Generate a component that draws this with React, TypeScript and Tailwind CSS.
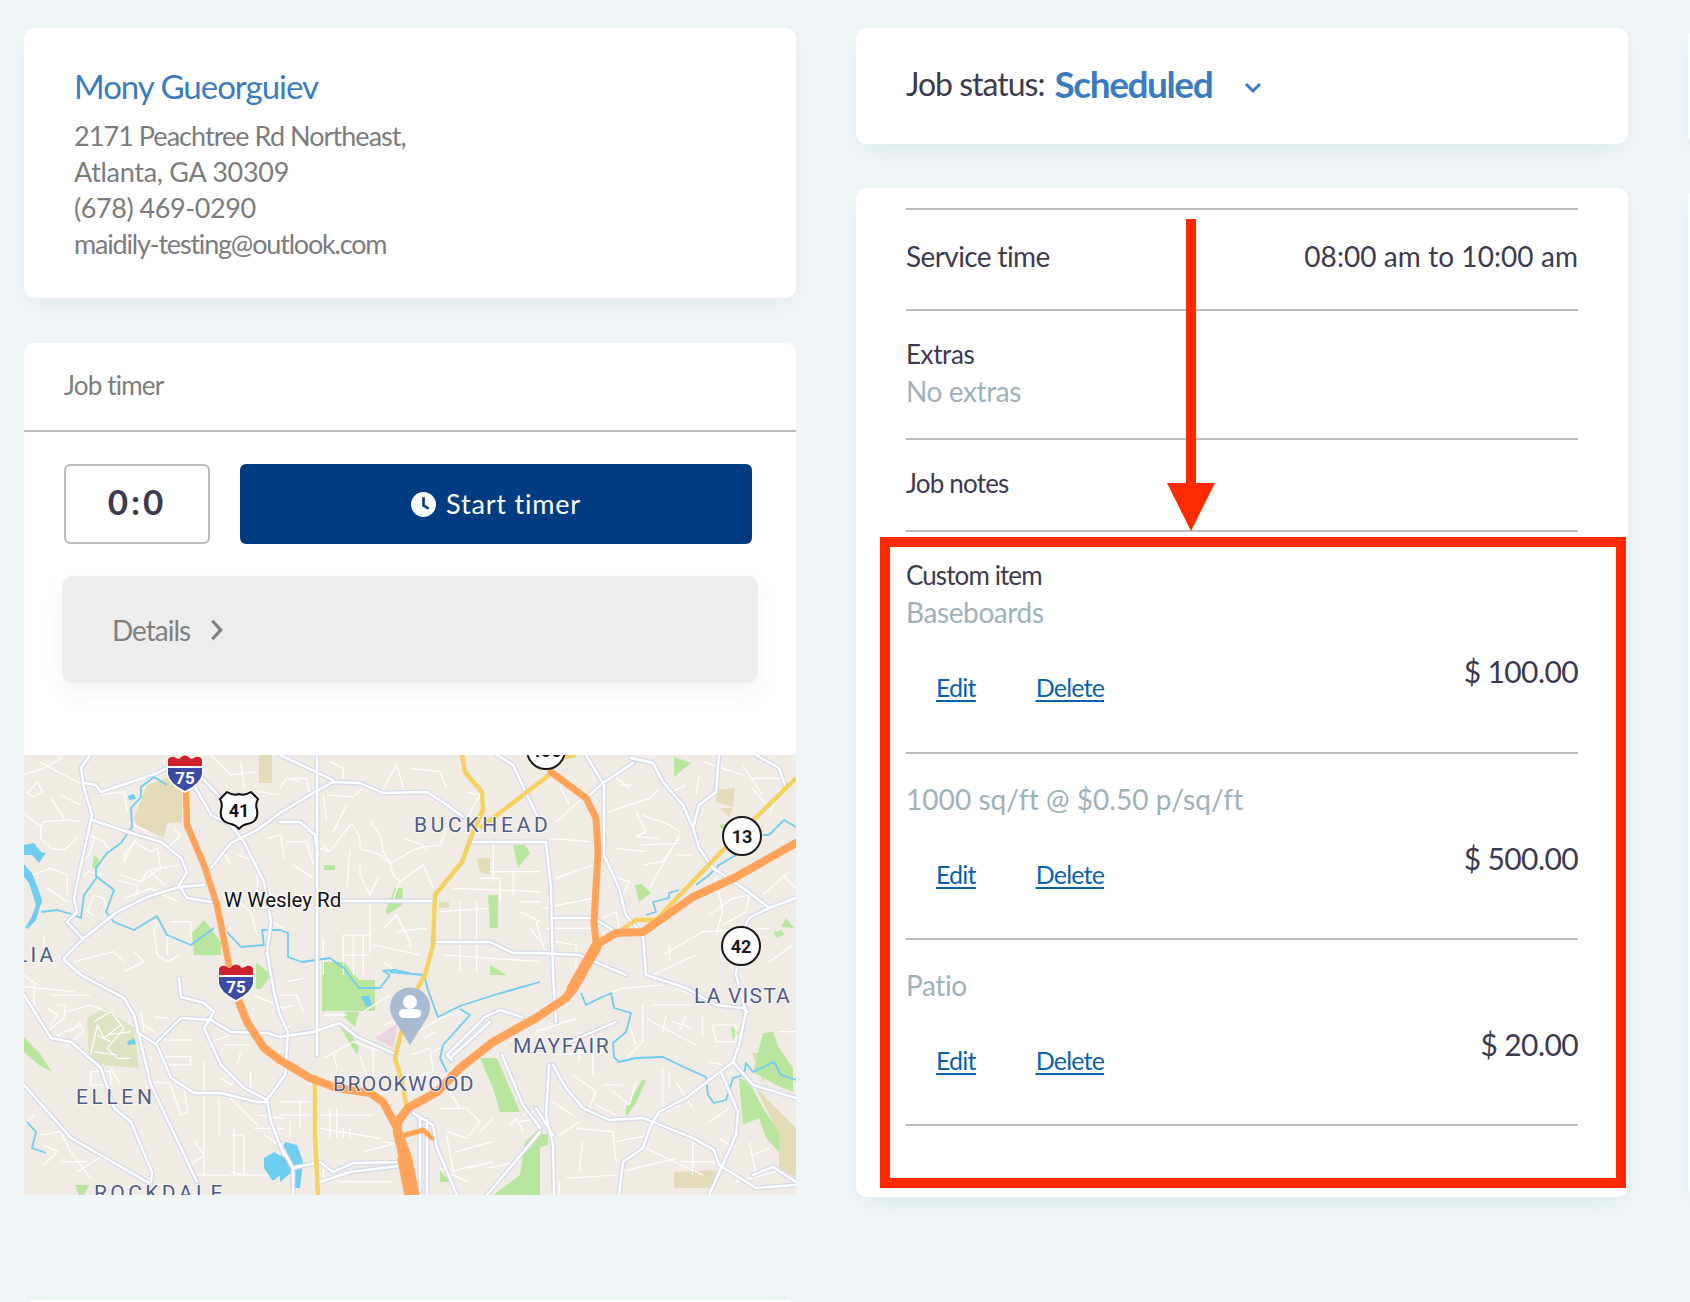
import { type FC } from "react";

const lineItems = [
  { title: "Custom item", sub: "Baseboards", price: "$ 100.00", height: "h-[222px]", pad: "pt-[25px]", track: "tracking-[-0.4px]" },
  { sub: "1000 sq/ft @ $0.50 p/sq/ft", price: "$ 500.00", height: "h-[186px]", pad: "pt-[27px]", track: "tracking-[0.06px]" },
  { sub: "Patio", price: "$ 20.00", height: "h-[186px]", pad: "pt-[27px]", track: "tracking-[-0.4px]" },
];

// map geometry, map pixels (772x440)
const arterials = [
  "66 0 57 13 60 33 68 60 57 110 50 143 53 157 43 167 58 183",
  "60 28 72 30 77 37 113 25 133 18 143 13",
  "68 65 107 78 137 87 157 103 163 117 155 130 163 143 187 147",
  "155 132 180 130",
  "40 203 60 183 93 157 123 142 155 132",
  "170 30 187 60 207 70 220 87 240 127 247 167 243 197 247 220 250 237 256 260 264 277 261 320 243 345 247 367 260 400",
  "178 23 197 43",
  "187 113 207 88 233 75 256 58 289 38 309 27 336 28 359 38 403 37 419 47 439 62",
  "293 0 293 300",
  "256 67 276 67 291 80 294 100",
  "256 0 309 25",
  "316 146 409 146",
  "413 187 466 187 489 198 512 198 555 200 602 220",
  "449 87 522 87 527 133 529 220 532 267",
  "473 0 489 10 514 63",
  "562 0 580 30 580 100 595 133 602 160 619 180 622 220 662 233 692 250 719 253 724 257",
  "562 43 579 28 609 8",
  "607 3 629 8 639 27 659 50 669 73 675 93 689 113 725 137 745 153 772 143",
  "669 73 675 50 692 37 695 0",
  "732 0 755 13 762 33",
  "745 153 725 163 717 180 712 220 722 257 715 290 709 307 662 343 635 357 627 370 619 393 599 407 595 440",
  "529 163 569 163 592 177",
  "709 307 729 330 772 343",
  "697 317 714 357 712 380 685 440",
  "592 267 545 287",
  "529 310 542 333 559 353 585 365 619 363 669 383 690 395 695 410 732 433 772 430",
  "525 310 522 360 529 390 530 440",
  "512 353 529 380",
  "729 420 749 412 772 427",
  "256 282 289 277 316 268 333 282 369 298",
  "423 300 461 262 476 255 498 262",
  "426 303 466 267",
  "423 300 428 305",
  "389 358 409 370 413 393 433 440",
  "478 300 499 350 516 373",
  "463 440 516 377",
  "296 427 326 417 383 410",
  "269 413 296 407 309 417 329 408 383 407",
  "256 390 269 413 269 440",
  "396 363 396 440",
  "403 365 403 440",
  "40 205 57 220 100 243 110 260 127 330 173 427",
  "0 240 27 283 47 287 77 313 90 353 107 367 128 417 127 427",
  "0 330 47 383 125 428",
  "113 277 133 290 147 323 170 338 197 338 233 347 243 347",
  "132 288 157 263 187 265 207 277 243 278 256 282",
  "155 223 157 242 180 248 190 257 180 273 197 310 220 333 243 345",
];

const water = [
  "0 110 13 133 17 147 10 160 2 173",
  "17 157 33 155 47 159 57 163 60 140 73 122 90 135 82 157 90 167 110 175 133 161 143 180 167 190 190 173",
  "72 122 72 113 83 98 97 88 108 72 107 53 117 42 117 32 130 22 143 30",
  "203 177 217 192 240 190 238 175 256 175 264 178 264 202 278 207 306 203 320 213 325 220 335 233 356 233 366 220",
  "366 220 359 216 370 215 385 218",
  "366 217 400 220 404 235 414 262 436 251 470 240 516 227",
  "436 254 446 260 419 290 416 303 423 317",
  "622 160 632 157 629 147 645 143 645 138 655 135",
  "672 130 685 120 695 110 712 100",
  "739 80 745 80 760 65 772 72",
  "557 238 562 250 572 245 587 238 590 253 607 258 602 277 589 288 590 302 595 307 612 303 639 302 662 313 682 322 684 340 690 348 702 345 709 323 720 320 722 308 729 317 750 307 757 320 772 325",
  "3 367 12 377 8 393 22 398",
];

const ponds = [
  "0 90 10 88 17 97 22 98 15 108 8 100 0 100",
  "104 41 110 39 112 44 105 45",
  "337 241 345 241 348 250 342 252",
  "240 403 250 397 260 403 260 417 250 425 248 425 240 413",
  "256 403 261 387 273 390 279 407 276 433 269 433 268 417 256 427",
  "103 287 110 283 112 289 104 290",
];

const parks = [
  "168 178 180 165 197 187 197 200 170 200",
  "298 207 320 207 335 225 351 225 351 256 298 256",
  "321 257 335 257 331 272 320 262",
  "316 272 333 300 335 293 326 277",
  "300 110 311 110 311 115 300 115",
  "371 133 379 133 378 150 363 160 362 155",
  "464 140 474 140 474 173 466 173",
  "489 90 501 90 506 98 494 113",
  "466 210 483 220 466 220",
  "611 130 618 129 627 138 615 147",
  "650 2 667 8 650 22 650 12",
  "695 70 705 68 700 77",
  "750 177 758 175 760 180 752 183",
  "757 172 762 163 770 173",
  "456 303 473 303 496 357 476 357 469 333",
  "501 387 516 373 516 440 469 440 496 420",
  "416 415 426 427 416 427",
  "707 272 715 277 709 285",
  "739 278 749 277 755 293 769 313 769 337 752 330 729 317",
  "715 323 725 327 739 353 755 377 755 397 742 383 735 363 719 370",
  "618 325 622 325 612 348 602 362 602 353",
  "512 377 524 380 524 390 512 393",
  "0 282 17 300 28 317 15 310 0 297",
  "51 430 65 430 60 440 55 440",
  "70 100 75 105 72 115 68 112",
  "232 207 247 220 237 234 232 234",
];

const khaki = [
  "110 63 123 30 143 23 158 37 158 67 143 68 140 83 113 70",
  "235 0 248 0 248 28 235 28",
  "453 103 466 103 466 120 456 117",
  "415 147 425 147 425 153 415 153",
  "692 35 711 33 709 52 692 47",
  "696 53 709 53 705 62",
  "728 298 742 297 745 313 739 327",
  "732 333 772 373 772 423 755 413 755 380",
  "650 417 692 415 692 433 650 433",
];

const streets: Record<string, string[]> = {
  "0 0": [
    "45 20 120 60 170 85", "10 115 40 80 55 110 30 125 10 115", "0 175 50 215 60 200 130 195 170 200",
    "50 215 50 250 80 280 120 285 160 250", "210 250 200 290 170 330", "195 240 240 260 260 290",
    "300 320 330 260 380 290 400 280 410 340 350 380 290 360", "350 380 375 345 470 330", "375 345 420 390",
    "180 360 195 350 235 360", "280 375 340 390 340 420", "250 480 240 430 210 420 190 470 210 480",
    "400 500 390 530 400 600 430 620 470 600", "430 540 430 600", "560 0 620 60 700 50", "650 20 660 100",
    "700 110 770 120", "730 250 770 240 780 310", "600 290 620 330", "340 250 300 300 300 320",
    "230 120 300 110 310 170", "0 60 60 40 110 10", "110 120 170 150", "80 130 120 190", "0 370 80 340 130 360 130 420",
    "70 400 130 440", "300 430 380 400 460 440", "440 500 500 500 500 540", "310 200 370 230", "450 220 470 240 430 280",
    "640 300 700 320 700 420", "620 420 680 470 700 540", "740 500 780 520", "330 590 360 620 300 650", "60 540 60 620",
    "150 620 270 590 300 620",
  ],
  "256 0": [
    "140 120 220 125 250 100", "215 205 150 290 130 270", "150 290 120 280",
    "215 205 240 250 240 280 300 300 330 325 410 280 480 270 500 220",
    "270 200 300 240 310 290 330 325 340 360 360 380 400 350 430 330 460 400", "210 285 200 400", "360 380 340 430",
    "300 120 350 30 370 100", "240 320 240 360 270 420 295 365", "130 550 130 660", "190 540 270 540", "190 540 190 660",
    "220 540 220 660", "250 540 250 660", "190 600 270 600", "270 450 270 590", "310 520 350 480 390 560 390 580",
    "280 570 420 600", "480 470 620 460", "520 400 780 410", "590 440 590 650", "540 440 540 650", "490 600 780 620",
    "630 350 780 350", "640 260 640 380", "700 350 700 420", "720 440 780 440", "150 20 190 40 190 70", "30 70 80 70 90 120",
    "370 250 430 270 440 290", "390 40 480 50 500 100", "560 110 600 120 560 190", "130 120 140 200", "200 150 160 230",
    "0 100 20 70 60 80", "600 370 660 370 660 440", "720 470 780 500", "750 520 780 560", "20 260 80 260 100 330", "40 330 100 370",
    "350 530 440 520", "310 620 350 650",
  ],
  "512 0": [
    "220 170 340 130 370 100", "300 170 330 230 300 245 370 250", "320 180 400 210 430 230", "310 270 430 265",
    "320 330 380 320 430 250", "340 400 430 240", "420 300 470 300", "60 200 140 130", "60 370 170 330", "40 250 160 260",
    "20 460 170 430", "250 90 290 90", "500 20 560 40 620 60", "640 70 750 70", "650 100 700 160", "540 370 560 470 540 540",
    "520 480 590 430 640 420 630 470 560 510", "380 600 500 530 700 520", "400 570 400 620", "700 620 770 570", "740 360 780 400",
    "30 520 170 520", "0 500 30 600", "350 660 480 600", "240 280 330 290", "220 360 280 380 260 420", "70 90 100 150", "200 490 240 470 250 520",
    "490 60 480 120", "620 30 680 120", "730 100 700 180", "60 560 120 570 120 640", "600 560 560 620", "680 420 760 350", "230 60 280 100", "410 110 450 90",
  ],
  "0 220": [
    "0 35 150 50", "80 60 200 60", "30 30 30 110", "100 90 125 90 120 130 75 165", "125 110 200 90 250 110",
    "100 180 170 150 180 170 130 210 100 180", "210 230 280 240", "200 290 260 290 260 330 200 330 200 290", "260 280 290 330",
    "350 110 360 170", "360 150 390 170", "390 125 430 130", "410 195 510 195", "420 245 500 245 500 270 420 270",
    "440 330 470 420 490 410 480 340", "380 320 440 325", "540 260 540 600", "585 370 585 480", "520 600 780 600",
    "50 480 110 470 140 530 200 610", "110 560 190 560", "620 480 660 480 660 600 620 590", "630 460 630 600",
    "510 500 540 540 500 570", "600 300 640 310 620 330 590 310", "600 210 680 210", "650 230 640 270", "680 290 680 360",
    "0 450 30 420", "690 60 780 100", "700 420 780 430", "690 460 780 460",
    "210 140 260 110 300 160 250 220 280 250 320 250", "200 240 220 150 240 190 290 150", "220 180 260 200", "250 180 320 170",
    "140 170 170 140", "70 100 100 120 80 150", "60 510 100 530 60 570", "160 590 240 540", "720 480 780 520", "600 350 700 450", "560 200 620 180", "0 0 40 30",
  ],
  "256 220": [
    "0 60 50 60 70 110", "40 90 0 100", "160 230 170 280", "130 120 200 120", "130 250 220 200 300 230", "280 220 280 350",
    "400 180 480 130 540 110", "390 240 450 220 460 290 390 310", "460 230 500 210", "120 420 280 420", "150 400 150 490",
    "170 400 170 490", "190 460 190 490", "210 460 210 490", "120 460 300 490", "310 500 370 510", "250 530 370 500",
    "480 400 560 400 600 440 560 490 500 470", "500 480 520 590 580 570", "600 470 640 430", "500 340 540 400", "530 530 640 500",
    "640 560 560 580", "690 450 710 430 730 470", "720 440 780 430", "0 420 90 420", "0 380 90 380", "30 440 30 490", "60 380 60 460",
    "240 240 260 300", "310 150 420 110", "430 190 470 170", "0 130 30 160", "130 570 130 620", "170 620 340 620", "480 580 560 620", "730 420 780 400",
    "620 580 720 560", "20 20 70 10", "250 110 330 60",
  ],
  "512 220": [
    "330 130 480 210", "320 90 320 200 270 250", "350 90 470 90", "390 120 380 170", "450 120 430 170", "500 180 500 120",
    "530 150 600 150 600 200 540 200 530 150", "0 170 120 130", "130 180 130 260", "170 160 170 300", "110 300 180 350 160 400",
    "60 240 200 230", "200 330 260 330", "230 350 280 390 300 320", "380 280 380 400", "400 290 400 340", "420 320 470 400",
    "120 460 230 470 240 560", "140 500 130 590", "90 610 240 600", "260 590 420 550", "330 520 500 600", "240 500 340 480",
    "380 460 470 480 470 600", "520 440 580 400", "520 260 560 270", "730 170 780 170", "640 500 660 600", "550 490 580 510",
    "200 60 260 40 380 30", "380 20 470 60", "70 480 130 440", "600 620 720 590", "70 620 70 660", "350 430 430 390", "280 150 300 210", "410 140 470 160",
    "180 390 240 420", "50 380 110 420", "430 560 540 560", "650 540 700 520",
  ],
};

const highways = [
  { pts: "162 37 163 70 180 110 193 150 205 210", w: 6.5 },
  { pts: "215 247 223 267 240 293 256 305 286 323 313 333 346 338 359 347 373 373 383 400 388 440", w: 8 },
  { pts: "557 222 542 243 512 263 469 287 436 313 413 337 384 353 374 367 373 377 388 440", w: 8.5 },
  { pts: "545 240 557 220 572 190 592 178 619 177 669 142 712 122 772 88", w: 8 },
  { pts: "572 187 570 167 574 97 572 63 562 43 527 17", w: 7 },
  { pts: "378 381 399 375 408 383", w: 5 },
  { pts: "381 405 388 440", w: 15 },
  { pts: "548 234 572 192", w: 11 },
];

const yellows = [
  "438 0 441 17 458 37 459 55 449 77 438 107 411 140 409 190 401 220 394 232 379 270 371 303 378 327 383 353",
  "456 73 473 60 525 20",
  "291 320 291 380 294 440",
  "594 177 612 165 632 165 699 95 772 23",
  "540 2 552 0",
];

const labels = [
  { text: "BUCKHEAD", x: 390, y: 77, spacing: 3.7 },
  { text: "LIA", x: -8, y: 207, spacing: 3.2 },
  { text: "ELLEN", x: 52, y: 349, spacing: 3.6 },
  { text: "ROCKDALE", x: 70, y: 445, spacing: 3.4 },
  { text: "BROOKWOOD", x: 309, y: 336, spacing: 1.4 },
  { text: "MAYFAIR", x: 489, y: 298, spacing: 1.6 },
  { text: "LA VISTA", x: 670, y: 248, spacing: 1.2 },
];

const InterstateShield: FC<{ x: number; y: number }> = ({ x, y }) => (
  <g transform={`translate(${x} ${y})`}>
    <path d="M-18 3 L-18 19 Q-17 29 0 38 Q17 29 18 19 L18 3 Z" fill="#fff" />
    <path d="M-17 11 L-17 4 Q-13 0 -9 3 Q-5 5 -4 2 Q0 -1 4 2 Q5 5 9 3 Q13 0 17 4 L17 11 Z" fill="#cc2229" />
    <path d="M-17 13 H17 V19 Q16 28 0 36 Q-16 28 -17 19 Z" fill="#3c4ca6" />
    <text x="0" y="29" textAnchor="middle" fill="#fff" fontSize="17" fontWeight="700" className="font-['Roboto',sans-serif]">75</text>
  </g>
);

const RouteCircle: FC<{ x: number; y: number; text: string }> = ({ x, y, text }) => (
  <g>
    <circle cx={x} cy={y} r="19" fill="#fff" stroke="#1a1a1a" strokeWidth="2" />
    <text x={x} y={y + 6.5} textAnchor="middle" fill="#1a1a1a" fontSize="18" fontWeight="700" className="font-['Roboto',sans-serif]">{text}</text>
  </g>
);

const MapView: FC = () => (
  <svg viewBox="0 0 772 440" className="block w-[772px] h-[440px]">
    <rect width="772" height="440" fill="#f0ebe4" />
    {khaki.map((p) => <polygon key={p} points={p} fill="#e3dcb8" />)}
    <polygon points="63 263 80 253 110 273 115 313 77 310 65 305" fill="#dde2c0" />
    {parks.map((p) => <polygon key={p} points={p} fill="#b9e69f" />)}
    <polygon points="351 283 374 268 369 293" fill="#e8d6de" />
    {Object.entries(streets).map(([at, list]) => (
      <g key={at} transform={`translate(${at}) scale(0.3333)`} fill="none" stroke="#fff" strokeWidth="3.6" strokeLinejoin="round">
        {list.map((p) => <polyline key={p} points={p} />)}
      </g>
    ))}
    <g fill="none" stroke="#6fcdf2" strokeWidth="1.8" strokeLinejoin="round">
      {water.map((p) => <polyline key={p} points={p} />)}
    </g>
    <polygon points="0 110 8 118 18 145 12 165 3 175 12 150 5 128 0 122" fill="#6fcdf2" />
    {ponds.map((p) => <polygon key={p} points={p} fill="#6fcdf2" />)}
    <g fill="none" stroke="#d5d9ea" strokeWidth="5" strokeLinejoin="round" strokeLinecap="round">
      {arterials.map((p) => <polyline key={p} points={p} />)}
    </g>
    <g fill="none" stroke="#fff" strokeWidth="2.4" strokeLinejoin="round" strokeLinecap="round">
      {arterials.map((p) => <polyline key={p} points={p} />)}
    </g>
    <g fill="none" stroke="#f5d162" strokeWidth="4.5" strokeLinejoin="round">
      {yellows.map((p) => <polyline key={p} points={p} />)}
    </g>
    <g fill="none" stroke="#ffa35b" strokeLinejoin="round" strokeLinecap="round">
      {highways.map((h) => <polyline key={h.pts} points={h.pts} strokeWidth={h.w} />)}
    </g>

    {labels.map((l) => (
      <text
        key={l.text}
        x={l.x}
        y={l.y}
        fill="#505b86"
        stroke="#fff"
        strokeOpacity="0.7"
        strokeWidth="2"
        paintOrder="stroke"
        fontSize="21"
        letterSpacing={l.spacing}
        className="font-['Roboto',sans-serif]"
      >
        {l.text}
      </text>
    ))}
    <text x="200" y="152" fill="#111" stroke="#fff" strokeOpacity="0.8" strokeWidth="2.5" paintOrder="stroke" fontSize="20.5" className="font-['Roboto',sans-serif]">W Wesley Rd</text>

    <InterstateShield x={161} y={0} />
    <InterstateShield x={212} y={209} />
    <g transform="translate(215 55)">
      <path d="M-12 -18 Q-6 -14 0 -16 Q6 -14 12 -18 L19 -11 Q16 -6 18 0 Q20 12 8 14 Q3 15 0 19 Q-3 15 -8 14 Q-20 12 -18 0 Q-16 -6 -19 -11 Z" fill="#fff" stroke="#111" strokeWidth="2" strokeLinejoin="round" />
      <text x="0" y="6.5" textAnchor="middle" fill="#111" fontSize="18" fontWeight="700" className="font-['Roboto',sans-serif]">41</text>
    </g>
    <RouteCircle x={522} y={-5} text="400" />
    <RouteCircle x={718} y={81} text="13" />
    <RouteCircle x={717} y={191} text="42" />

    <path d="M386 290 L369 263 A20 20 0 1 1 403 263 Z" fill="#a9bbd3" />
    <circle cx="386" cy="247" r="7" fill="#fff" />
    <rect x="375" y="254" width="22" height="9" rx="4.5" fill="#fff" />
  </svg>
);

const Card: FC<{ className?: string; children?: React.ReactNode }> = ({ className = "", children }) => (
  <div className={`shrink-0 bg-white rounded-[10px] shadow-[0_10px_30px_rgba(20,60,90,0.06)] ${className}`}>{children}</div>
);

const Actions: FC<{ price: string }> = ({ price }) => (
  <div className="flex justify-between items-start mt-[22px]">
    <div className="flex gap-[60px] pl-[30px] pt-[16px] text-[25px] leading-[36px] tracking-[-0.8px] text-[#0b62ad] underline underline-offset-[3px]">
      <a href="#">Edit</a>
      <a href="#">Delete</a>
    </div>
    <span className="text-[30px] leading-[36px] tracking-[-0.6px]">{price}</span>
  </div>
);

export default function App() {
  return (
    <div className="h-[1302px] w-[1690px] overflow-hidden bg-[#f0f5f8] font-['Lato',sans-serif] flex gap-[60px] pl-[24px] pt-[28px] text-[#3d3a4f]">
      <div className="w-[772px] shrink-0 flex flex-col">
        <Card className="h-[270px] pl-[50px] pt-[38px]">
          <div className="text-[33px] leading-[40px] tracking-[-1px] text-[#3b7cc0]">Mony Gueorguiev</div>
          <div className="mt-[12px] text-[27px] leading-[36px] text-[#7c7c7c]">
            <div className="tracking-[-0.95px]">2171 Peachtree Rd Northeast,</div>
            <div className="tracking-[-0.3px]">Atlanta, GA 30309</div>
            <div className="tracking-[-0.45px]">(678) 469-0290</div>
            <div className="tracking-[-1.2px]">maidily-testing@outlook.com</div>
          </div>
        </Card>

        <Card className="mt-[45px] overflow-hidden rounded-b-none shadow-none">
          <div className="h-[89px] flex items-center pl-[40px] pb-[2px] border-b-2 border-[#bcbcbc] text-[26px] tracking-[-0.8px] text-[#7c7c7c]">Job timer</div>
          <div className="flex gap-[30px] pl-[40px] pt-[32px]">
            <div className="w-[146px] h-[80px] flex items-center justify-center pb-[6px] rounded-[6px] border-2 border-[#bcbcbc] text-[35px] font-bold tracking-[3px]">0:0</div>
            <button className="w-[512px] h-[80px] flex items-center justify-center gap-[10px] rounded-[6px] bg-[#003c82] text-white text-[27px] tracking-[0.8px]">
              <svg viewBox="0 0 24 24" className="w-[25px] h-[25px]">
                <circle cx="12" cy="12" r="12" fill="#fff" />
                <path d="M12 5v8l5 3" fill="none" stroke="#003c82" strokeWidth="2.6" />
              </svg>
              Start timer
            </button>
          </div>
          <div className="mt-[32px] ml-[38px] w-[696px] h-[107px] flex items-center gap-[20px] pl-[50px] rounded-[10px] bg-[#ededed] shadow-[0_10px_24px_rgba(0,0,0,0.05)] text-[28px] tracking-[-1px] text-[#7f7f7f]">
            Details
            <svg viewBox="0 0 14 24" className="w-[13px] h-[24px]">
              <path d="M2.5 2l9 10-9 10" fill="none" stroke="#7f7f7f" strokeWidth="3.4" />
            </svg>
          </div>
          <div className="mt-[72px]">
            <MapView />
          </div>
        </Card>
        <Card className="mt-[105px] h-[40px]" />
      </div>

      <div className="w-[772px] shrink-0 flex flex-col">
        <Card className="h-[116px] flex items-center pl-[50px] pb-[5px]">
          <span className="text-[32px] tracking-[-1px]">Job status:</span>
          <span className="ml-[10px] text-[37px] font-bold tracking-[-1.4px] text-[#3b7cc0]">Scheduled</span>
          <svg viewBox="0 0 18 12" className="ml-[32px] mt-[8px] w-[18px] h-[12px]">
            <path d="M2 2l7 7 7-7" fill="none" stroke="#3b7cc0" strokeWidth="3" />
          </svg>
        </Card>

        <Card className="relative mt-[44px] h-[1009px] px-[50px] pt-[20px] text-[28px]">
          <div className="h-[101px] border-t-2 border-[#bcbcbc] flex items-center justify-between pb-[8px]">
            <span className="tracking-[-0.6px]">Service time</span>
            <span className="tracking-[0.07px]">08:00 am to 10:00 am</span>
          </div>
          <div className="h-[129px] border-t-2 border-[#bcbcbc] pt-[25px] leading-[37px] tracking-[-0.4px]">
            <div className="text-[26px]">Extras</div>
            <div className="text-[#9fb1b9]">No extras</div>
          </div>
          <div className="h-[92px] border-t-2 border-[#bcbcbc] flex items-center pb-[4px] text-[26px] tracking-[-0.8px]">Job notes</div>
          {lineItems.map((item) => (
            <div key={item.sub} className={`${item.height} ${item.pad} border-t-2 border-[#bcbcbc] leading-[37px]`}>
              {item.title && <div className="text-[26px] tracking-[-0.9px]">{item.title}</div>}
              <div className={`text-[#9fb1b9] ${item.track}`}>{item.sub}</div>
              <Actions price={item.price} />
            </div>
          ))}
          <div className="border-t-2 border-[#bcbcbc]" />

          <div className="absolute left-[24px] top-[349px] w-[746px] h-[651px] border-[10px] border-[#ff2a00]" />
          <svg viewBox="0 0 50 314" className="absolute left-[310px] top-[31px] w-[50px] h-[314px]">
            <path d="M20 0h10v265h-10z M1 264h48l-24 48z" fill="#ff2a00" />
          </svg>
        </Card>
      </div>

      <div className="w-[772px] shrink-0 flex flex-col">
        <Card className="h-[116px]" />
        <Card className="mt-[44px] h-[1009px]" />
      </div>
    </div>
  );
}
